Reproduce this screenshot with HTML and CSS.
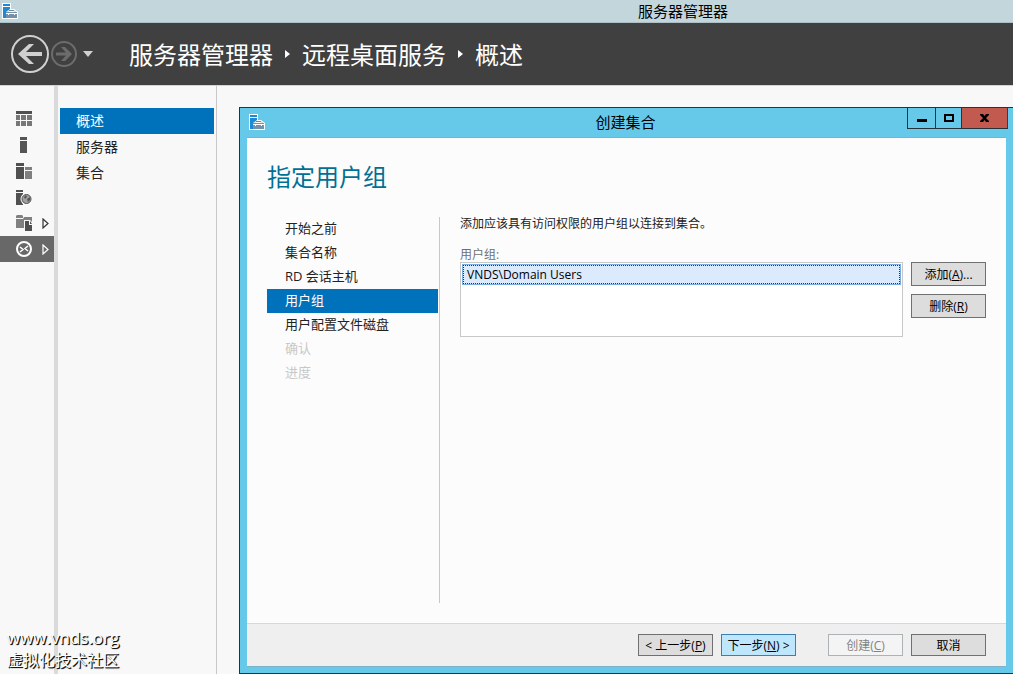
FILE: index.html
```html
<!DOCTYPE html>
<html lang="zh-CN">
<head>
  <meta charset="UTF-8" />
  <meta name="viewport" content="width=device-width, initial-scale=1.0" />
  <title>服务器管理器</title>
  <link rel="stylesheet" href="styles.css">
</head>
<body>
  <svg class="defs" width="0" height="0" aria-hidden="true">
    <symbol id="app-icon" viewBox="0 0 16 16">
      <path fill="#fff" d="M0 0h9v6h3l4 3v7H0z" />
      <path fill="#1e8ad6" d="M1 1h7v2H1zM1 4h7v2L4 9v6H1z" />
      <path fill="#7391a8" d="M4 9h11v6H4z" />
      <path fill="none" stroke="#6f8799" d="M6 8.500l1-1h5l1 1" />
      <path fill="none" stroke="#fff" d="M4 10.500h11M6.500 10v2M12.500 10v2" />
    </symbol>
  </svg>

  <header class="titlebar">
    <svg class="app-icon" width="16" height="16"><use href="#app-icon" /></svg>
    <h1>服务器管理器</h1>
  </header>

  <div class="toolbar">
    <button class="nav-btn" aria-label="后退">
      <svg width="38" height="38" viewBox="0 0 38 38">
        <circle cx="19" cy="19" r="18" fill="none" stroke="#d0d0d0" stroke-width="2" />
        <path fill="#d0d0d0" d="M7 19L18 9h5l-8 8h16v4H15l8 8h-5z" />
      </svg>
    </button>
    <button class="nav-btn" aria-label="前进">
      <svg width="26" height="26" viewBox="0 0 26 26">
        <circle cx="13" cy="13" r="12" fill="none" stroke="#6c6c6c" stroke-width="2" />
        <path fill="#6c6c6c" d="M21 13l-7-7h-4l5 5.500H5v3h10L10 20h4z" />
      </svg>
    </button>
    <button class="nav-btn history" aria-label="历史记录">
      <svg width="10" height="6"><path fill="#d0d0d0" d="M0 0h10L5 6z" /></svg>
    </button>
    <nav class="breadcrumb">
      <a href="#">服务器管理器</a>
      <svg width="5" height="8"><path fill="#fff" d="M0 0l5 4-5 4z" /></svg>
      <a href="#">远程桌面服务</a>
      <svg width="5" height="8"><path fill="#fff" d="M0 0l5 4-5 4z" /></svg>
      <a href="#">概述</a>
    </nav>
  </div>

  <div class="workspace">
    <nav class="rail">
      <a href="#" aria-label="仪表板">
        <svg width="16" height="16">
          <path fill="#505050" d="M0 0h16v3H0z" />
          <path fill="#777" d="M0 4h4v5H0zM5 4h5v5H5zM11 4h5v5h-5zM0 10h4v5H0zM5 10h5v5H5zM11 10h5v5h-5z" />
        </svg>
      </a>
      <a href="#" aria-label="本地服务器">
        <svg width="16" height="16"><path fill="#555" d="M4 0h7v3H4zM4 4h7v12H4z" /></svg>
      </a>
      <a href="#" aria-label="所有服务器">
        <svg width="16" height="16">
          <path fill="#505050" d="M0 0h8v3H0zM0 4h8v12H0z" />
          <path fill="#808080" d="M9 4h7v3H9zM9 8h7v8H9z" />
        </svg>
      </a>
      <a href="#" aria-label="文件和存储">
        <svg width="16" height="16">
          <path fill="#505050" d="M0 1h7v2H0zM0 4h7v12H0z" />
          <circle cx="10.500" cy="10" r="6" fill="#f8f8f8" />
          <circle cx="10.500" cy="10" r="4.500" fill="#a0a0a0" stroke="#505050" />
          <path fill="#555" d="M8 8l2-2 1 2-2 2zM11 10l3-2v3l-2 2z" />
        </svg>
      </a>
      <a href="#" aria-label="文件服务">
        <svg width="16" height="16">
          <path fill="#808080" d="M0 1l1-1h5l1 1v2H0zM0 4h7l1-2h8v5H8v6H0z" />
          <path fill="#f8f8f8" d="M8 5h6l2 2v9H8z" />
          <path fill="#505050" d="M9 6h4v4h3v6H9z" />
          <path fill="#505050" d="M14 6l2 3h-2z" />
        </svg>
        <svg class="expand" width="8" height="11"><path fill="none" stroke="#333" stroke-width="1.200" d="M1 1l5 4.500L1 10z" /></svg>
      </a>
      <a href="#" class="active" aria-label="远程桌面服务">
        <svg width="16" height="16">
          <circle cx="8" cy="8" r="7" fill="none" stroke="#fff" stroke-width="2" />
          <path fill="none" stroke="#fff" stroke-width="1.500" d="M4 6l3 2.500L4 11M12 5L9 7.500l3 2.500" />
        </svg>
        <svg class="expand" width="8" height="11"><path fill="none" stroke="#fff" stroke-width="1.200" d="M1 1l5 4.500L1 10z" /></svg>
      </a>
    </nav>

    <nav class="sidebar">
      <a href="#" class="active">概述</a>
      <a href="#">服务器</a>
      <a href="#">集合</a>
    </nav>

    <main class="content">
      <section class="dialog" role="dialog" aria-labelledby="dialog-title">
        <div class="dialog-title">
          <svg class="app-icon" width="16" height="16"><use href="#app-icon" /></svg>
          <h2 id="dialog-title">创建集合</h2>
          <div class="window-controls">
            <button class="minimize" aria-label="最小化">
              <svg width="10" height="10"><path d="M0 6h10v3H0z" /></svg>
            </button>
            <button class="maximize" aria-label="最大化">
              <svg width="10" height="8"><path fill="none" stroke="#000" stroke-width="2" d="M1 1h8v6H1z" /></svg>
            </button>
            <button class="close" aria-label="关闭">
              <svg width="9" height="8"><path d="M0 0h3l1.500 2L6 0h3v1L6 4l3 3v1H6L4.500 6 3 8H0V7l3-3-3-3z" /></svg>
            </button>
          </div>
        </div>

        <div class="dialog-body">
          <h3>指定用户组</h3>
          <div class="wizard">
            <ol class="steps">
              <li>开始之前</li>
              <li>集合名称</li>
              <li>RD 会话主机</li>
              <li class="active">用户组</li>
              <li>用户配置文件磁盘</li>
              <li class="disabled">确认</li>
              <li class="disabled">进度</li>
            </ol>
            <div class="page">
              <p>添加应该具有访问权限的用户组以连接到集合。</p>
              <label for="groups">用户组:</label>
              <div class="group-row">
                <select id="groups" size="3">
                  <option>VNDS\Domain Users</option>
                </select>
                <div class="group-actions">
                  <button class="btn">添加(<u>A</u>)...</button>
                  <button class="btn">删除(<u>R</u>)</button>
                </div>
              </div>
            </div>
          </div>
        </div>

        <footer class="dialog-footer">
          <button class="btn">&lt; 上一步(<u>P</u>)</button>
          <button class="btn primary">下一步(<u>N</u>) &gt;</button>
          <button class="btn create" disabled>创建(<u>C</u>)</button>
          <button class="btn">取消</button>
        </footer>
      </section>
    </main>
  </div>

  <div class="watermark">
    <p class="site">www.vnds.org</p>
    <p>虚拟化技术社区</p>
  </div>
</body>
</html>
```

FILE: styles.css
```css
:root {
  --accent: #0072bc;
  --frame: #66c9ea;
  --dark: #404040;
  --panel: #f8f8f8;
  --line: #c8c8c8;
}
* {
  margin: 0;
  padding: 0;
  box-sizing: border-box;
}
body {
  font-family: "Open Sans", "Noto Sans CJK SC", sans-serif;
  font-size: 12px;
  color: #222;
  background: var(--panel);
  height: 100vh;
  display: flex;
  flex-direction: column;
  overflow: hidden;
}
a {
  color: inherit;
  text-decoration: none;
}
button, select {
  font: inherit;
}
svg {
  display: block;
  flex: none;
}
.defs {
  position: absolute;
}

/* main window */
.titlebar {
  display: flex;
  align-items: center;
  height: 23px;
  padding-left: 2px;
  background: #c3d6dc;
  border-bottom: 1px solid #aebfc5;
}
.titlebar h1 {
  flex: 1;
  padding-left: 335px;
  text-align: center;
  font-size: 15px;
  font-weight: normal;
  line-height: 22px;
  color: #000;
}
.toolbar {
  display: flex;
  align-items: center;
  height: 63px;
  padding-left: 11px;
  background: var(--dark);
  border-bottom: 1px solid #d4d4d4;
}
.nav-btn {
  background: none;
  border: none;
  margin-right: 2px;
}
.nav-btn.history {
  margin-left: 4px;
}
.breadcrumb {
  display: flex;
  align-items: center;
  gap: 12px;
  margin-left: 34px;
  font-size: 24px;
  line-height: 36px;
  color: #fff;
}
.breadcrumb a {
  padding-top: 2px;
}
.workspace {
  flex: 1;
  display: flex;
  min-height: 0;
}
.rail {
  width: 58px;
  padding-top: 20px;
  border-right: 4px solid #dadada;
}
.rail a {
  display: flex;
  align-items: center;
  gap: 10px;
  height: 26px;
  padding-left: 16px;
}
.rail a.active {
  background: #686868;
}
.sidebar {
  width: 159px;
  padding: 22px 2px 0;
  border-right: 1px solid var(--line);
}
.sidebar a {
  display: block;
  padding-left: 16px;
  font-size: 14px;
  line-height: 26px;
}
.sidebar a.active {
  background: var(--accent);
  color: #fff;
}
.content {
  flex: 1;
  display: flex;
  padding: 21px 0 0 22px;
}

/* wizard dialog */
.dialog {
  flex: 1;
  display: flex;
  flex-direction: column;
  padding: 0 7px 6px;
  background: var(--frame);
  border: 1px solid #26343a;
  border-right: none;
}
.dialog-title {
  position: relative;
  display: flex;
  align-items: center;
  height: 30px;
  padding: 0 0 2px 2px;
  border-bottom: 1px solid #7db3c6;
}
.dialog-title h2 {
  flex: 1;
  padding-right: 20px;
  text-align: center;
  font-size: 15px;
  font-weight: normal;
  color: #000;
}
.window-controls {
  position: absolute;
  top: -1px;
  right: -2px;
  display: flex;
}
.window-controls button {
  display: flex;
  align-items: center;
  justify-content: center;
  width: 28px;
  height: 22px;
  background: var(--frame);
  border: 1px solid #26343a;
  border-right: none;
}
.window-controls .maximize {
  width: 26px;
}
.window-controls .close {
  width: 47px;
  background: #c35a50;
  border-right: 1px solid #4b3534;
}
.dialog-body {
  flex: 1;
  display: flex;
  flex-direction: column;
  padding: 21px 20px 20px;
  background: #fcfcfc;
}
.dialog-body h3 {
  font-size: 24px;
  font-weight: normal;
  line-height: 36px;
  color: #007095;
}
.wizard {
  flex: 1;
  display: flex;
  margin-top: 22px;
}
.steps {
  width: 173px;
  padding-right: 1px;
  border-right: 1px solid var(--line);
  list-style: none;
  font-size: 13px;
  line-height: 22px;
}
.steps li {
  padding: 0 0 2px 18px;
}
.steps li.active {
  background: var(--accent);
  color: #fff;
}
.steps li.disabled {
  color: #c8c8c8;
}
.page {
  flex: 1;
  padding-left: 20px;
}
.page p {
  line-height: 14px;
}
.page label {
  display: block;
  margin-top: 16px;
  line-height: 15px;
  color: #707070;
}
.group-row {
  display: flex;
  gap: 8px;
}
.group-row select {
  flex: 1;
  height: 75px;
  background: #fff;
  border: 1px solid var(--line);
  border-radius: 0;
  outline: none;
  overflow: hidden;
}
.group-row option {
  height: 19px;
  min-height: 19px;
  margin: 2px;
  padding: 0 3px;
  line-height: 17px;
  color: #000;
  background: #dbeafd;
  border: 1px dotted #333;
  outline: 1px solid #79ade0;
}
.group-actions {
  display: flex;
  flex-direction: column;
  gap: 8px;
}
.btn {
  width: 75px;
  height: 24px;
  padding-top: 1px;
  line-height: 20px;
  white-space: nowrap;
  color: #000;
  background: #ddd;
  border: 1px solid #707070;
}
.btn.primary {
  background: #bee6fd;
  border-color: #3c7fb1;
}
.btn:disabled {
  color: #838383;
  background: #f4f4f4;
  border-color: #adb2b5;
}
.dialog-footer {
  display: flex;
  align-items: center;
  justify-content: flex-end;
  gap: 8px;
  height: 44px;
  padding-right: 20px;
  background: #efefef;
  border-top: 1px solid #d8d8d8;
  border-bottom: 1px solid #7db3c6;
}
.dialog-footer .btn {
  height: 22px;
}
.dialog-footer .create {
  margin-left: 24px;
}

.watermark {
  position: absolute;
  left: 7px;
  bottom: 2px;
  font-size: 16px;
  line-height: 23px;
  color: #fff;
  text-shadow: 1px 1px 1px #111, 1px 1px 0 #333;
}
.watermark .site {
  font-size: 17px;
}
```
